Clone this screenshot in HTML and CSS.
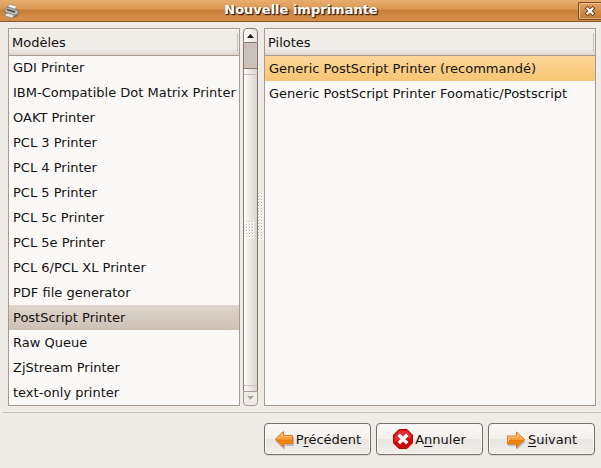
FILE: index.html
```html
<!DOCTYPE html>
<html lang="fr">
<head>
<meta charset="utf-8">
<title>Nouvelle imprimante</title>
<link rel="stylesheet" href="styles.css">
</head>
<body>
<div class="window">
  <header class="titlebar">
    <svg class="app-icon" width="16" height="16" viewBox="0 0 16 16" aria-hidden="true">
      <path d="M1 8l3-3 9 1 2 3-1 4-3 2-9-2z" fill="#6b6963" opacity=".6"/>
      <path d="M4.500 1l8 2-1.500 4-7-1.500z" fill="#f1f1ef" stroke="#8d8c89" stroke-width=".7"/>
      <path d="M1 6l3-2 10.500 3.500-.5 3.500-3 1.500L.5 9z" fill="#b9bab8" stroke="#696763" stroke-width=".7"/>
      <path d="M3 6.500l8 2.500" stroke="#444" stroke-width="1.500"/>
      <path d="M2.500 10l7.500 2-1.500 3L.8 13z" fill="#e9e9e7" stroke="#8d8c89" stroke-width=".7"/>
    </svg>
    <h1 class="title">Nouvelle imprimante</h1>
    <button class="close" type="button" aria-label="Fermer">
      <svg width="12" height="12" viewBox="0 0 12 12" aria-hidden="true">
        <path d="M3.500 3.500l5 5M8.500 3.500l-5 5" stroke="#6a421c" stroke-width="4" stroke-linecap="square"/>
        <path d="M3.500 3.500l5 5M8.500 3.500l-5 5" stroke="#fff" stroke-width="2.200" stroke-linecap="square"/>
      </svg>
    </button>
  </header>

  <main class="panes">
    <section class="pane models">
      <h2 class="column-head" id="models-label">Modèles</h2>
      <ul class="list" role="listbox" aria-labelledby="models-label">
        <li class="row" role="option">GDI Printer</li>
        <li class="row" role="option">IBM-Compatible Dot Matrix Printer</li>
        <li class="row" role="option">OAKT Printer</li>
        <li class="row" role="option">PCL 3 Printer</li>
        <li class="row" role="option">PCL 4 Printer</li>
        <li class="row" role="option">PCL 5 Printer</li>
        <li class="row" role="option">PCL 5c Printer</li>
        <li class="row" role="option">PCL 5e Printer</li>
        <li class="row" role="option">PCL 6/PCL XL Printer</li>
        <li class="row" role="option">PDF file generator</li>
        <li class="row chosen" role="option" aria-selected="true">PostScript Printer</li>
        <li class="row" role="option">Raw Queue</li>
        <li class="row" role="option">ZjStream Printer</li>
        <li class="row" role="option">text-only printer</li>
      </ul>
    </section>

    <div class="scrollbar">
      <button class="step up" type="button" aria-label="Défiler vers le haut">
        <svg width="7" height="4" viewBox="0 0 7 4" aria-hidden="true"><path d="M0 4L3.500 0 7 4z" fill="#111"/></svg>
      </button>
      <div class="trough"></div>
      <div class="thumb"><span class="grip thumb-grip"></span></div>
      <button class="step down" type="button" aria-label="Défiler vers le bas" disabled>
        <svg width="8" height="5" viewBox="0 0 8 5" aria-hidden="true"><path d="M1 1h7L4.500 5z" fill="#fff"/><path d="M0 0h7L3.500 4z" fill="#aaa49d"/></svg>
      </button>
    </div>

    <div class="splitter"><span class="grip splitter-grip"></span></div>

    <section class="pane drivers">
      <h2 class="column-head" id="drivers-label">Pilotes</h2>
      <ul class="list" role="listbox" aria-labelledby="drivers-label">
        <li class="row active" role="option" aria-selected="true">Generic PostScript Printer (recommandé)</li>
        <li class="row" role="option">Generic PostScript Printer Foomatic/Postscript</li>
      </ul>
    </section>
  </main>

  <footer class="actions">
    <button class="action" type="button">
      <svg width="20" height="20" viewBox="0 0 20 20" aria-hidden="true">
        <defs><linearGradient id="orange" x1="0" y1="0" x2="0" y2="1"><stop offset="0" stop-color="#fdb45c"/><stop offset=".5" stop-color="#f99a32"/><stop offset=".55" stop-color="#f57900"/><stop offset="1" stop-color="#ff9a10"/></linearGradient></defs>
        <path d="M2 11.500L10 19v-3h9V8" fill="none" stroke="#000" stroke-opacity=".2" stroke-width="2"/>
        <path d="M1.500 10L9.500 2.500v4h9v8h-9v3.500z" fill="url(#orange)" stroke="#d9751a" stroke-linejoin="round"/>
        <path d="M3 10l5.500-5v2.500h9" fill="none" stroke="#ffd29a" stroke-width=".8"/>
      </svg>
      <span>P<u>r</u>écédent</span>
    </button>
    <button class="action" type="button">
      <svg width="20" height="20" viewBox="0 0 20 20" aria-hidden="true">
        <path d="M6 .5h8L19.500 6v8L14 19.500H6L.5 14V6z" fill="#cf0000" stroke="#b80808"/>
        <path d="M6.500 1.500h7l5 5v3Q10 8 1.500 13V6.500z" fill="#dd3030"/>
        <path d="M7 7l6 6M13 7l-6 6" stroke="#fff" stroke-width="3.500" stroke-linecap="square"/>
      </svg>
      <span>A<u>n</u>nuler</span>
    </button>
    <button class="action" type="button">
      <svg width="20" height="20" viewBox="0 0 20 20" aria-hidden="true">
        <path d="M2 16h9v3l8-7" fill="none" stroke="#000" stroke-opacity=".2" stroke-width="2"/>
        <path d="M18.500 10.500L10.500 3v4h-9v8h9v3.500z" fill="url(#orange)" stroke="#d9751a" stroke-linejoin="round"/>
        <path d="M2.500 13V8h9V5.200l5 4.800" fill="none" stroke="#ffd29a" stroke-width=".8"/>
      </svg>
      <span><u>S</u>uivant</span>
    </button>
  </footer>
</div>
</body>
</html>
```

FILE: styles.css
```css
* {
  box-sizing: border-box;
}

body {
  margin: 0;
  background: #efebe7;
  color: #111;
  font-family: "DejaVu Sans", sans-serif;
  font-size: 13px;
}

button {
  margin: 0;
  padding: 0;
  color: inherit;
  font: inherit;
}

.window {
  display: flex;
  flex-direction: column;
  min-height: 100vh;
}

.titlebar {
  display: flex;
  align-items: center;
  height: 22px;
  padding: 0 0 0 4px;
  background: linear-gradient(#e9ad70 0, #dd9853 9px, #c87f39 10px, #d58e4a 20px);
  border-bottom: 1px solid #8b5a2b;
}

.title {
  flex: 1;
  margin: 0;
  padding: 0 0 2px 4px;
  color: #fff;
  font-size: 13px;
  line-height: 18px;
  text-align: center;
  text-shadow: 1px 1px 1px #3c2208, 1px 1px 1px #3c2208;
}

.close {
  display: flex;
  align-items: center;
  justify-content: center;
  width: 23px;
  height: 18px;
  border: 1px solid #7d4c1e;
  border-right: 0;
  border-radius: 2px 0 0 2px;
  background: linear-gradient(#dfa164, #c27a36);
  box-shadow: inset 1px 1px #f0c08c, inset 0 -1px #e4ac74;
}

.panes {
  display: flex;
  flex: 1;
  padding: 6px 5px 6px 8px;
}

.pane {
  display: flex;
  flex-direction: column;
  min-width: 0;
  border: 1px solid #a89a8e;
  background: #fbf9f7;
}

.models {
  flex: 0 0 232px;
}

.drivers {
  flex: 1;
}

.column-head {
  flex: none;
  height: 27px;
  margin: 0;
  padding: 0 3px;
  border-bottom: 1px solid #a89a8e;
  background:
    linear-gradient(#c5bfb8, #c5bfb8) right 1px top 4px / 1px 19px no-repeat,
    linear-gradient(#fff 0, #f1eeea 1px, #efebe7 20px, #ddd7d1 26px);
  font-size: 13px;
  font-weight: normal;
  line-height: 27px;
}

.list {
  margin: 0;
  padding: 0;
  list-style: none;
}

.models .list {
  margin-top: -1px;
}

.row {
  height: 25px;
  padding: 0 4px;
  line-height: 25px;
  white-space: nowrap;
}

.chosen {
  background: linear-gradient(#ded5cc, #cdc1b6);
}

.active {
  background: linear-gradient(#fdd698, #f6c574);
}

.scrollbar {
  display: flex;
  flex-direction: column;
  flex: 0 0 15px;
  margin-left: 3px;
}

.step {
  display: flex;
  align-items: center;
  justify-content: center;
  height: 15px;
  border: 1px solid #85786e;
  background: linear-gradient(90deg, #fff, #e8e3dd);
}

.up {
  border-radius: 4px 4px 0 0;
}

.down {
  border-color: #a89a8e;
  border-radius: 0 0 4px 4px;
  background: #efebe7;
}

.trough {
  height: 25px;
  border: solid #85786e;
  border-width: 0 1px;
  background: #cbc0b7;
}

.thumb {
  display: flex;
  align-items: center;
  justify-content: center;
  flex: 1;
  border: solid #85786e;
  border-width: 1px 1px 0;
  background:
    linear-gradient(#c5bdb5, #c5bdb5) 0 5px / 100% 1px no-repeat,
    linear-gradient(#c5bdb5, #c5bdb5) 0 calc(100% - 5px) / 100% 1px no-repeat,
    linear-gradient(90deg, #fff 0, #f5f2ef 3px, #dbd4cd 100%);
}

/* Embossed dots: a grey pixel with a white highlight, every 3px */
.grip {
  background:
    linear-gradient(#b5aea7, #b5aea7) 0 0 / 1px 1px,
    linear-gradient(#fff, #fff) 0 0 / 2px 2px;
  background:
    conic-gradient(from 270deg at 1px 1px, #b5aea7 90deg, transparent 0) 0 0 / 3px 3px,
    conic-gradient(from 270deg at 2px 2px, #fff 90deg, transparent 0) 0 0 / 3px 3px;
}

.thumb-grip {
  width: 9px;
  height: 18px;
}

.splitter {
  display: flex;
  align-items: center;
  justify-content: center;
  flex: 0 0 6px;
}

.splitter-grip {
  width: 6px;
  height: 48px;
}

.actions {
  display: flex;
  justify-content: flex-end;
  gap: 5px;
  margin-left: 2px;
  padding: 10px 6px 13px;
  border-top: 1px solid #c3bdb6;
}

.action {
  display: flex;
  align-items: center;
  justify-content: center;
  gap: 2px;
  width: 107px;
  height: 32px;
  border: 1px solid #776f66;
  border-radius: 4px;
  background: linear-gradient(#fbf9f8, #f3f0ed 50%, #e9e5e0 51%, #f1eeeb);
  box-shadow: inset 0 0 0 1px #faf8f6, 0 1px #dcd6cf;
}

.action u {
  text-underline-offset: 2px;
}
```
